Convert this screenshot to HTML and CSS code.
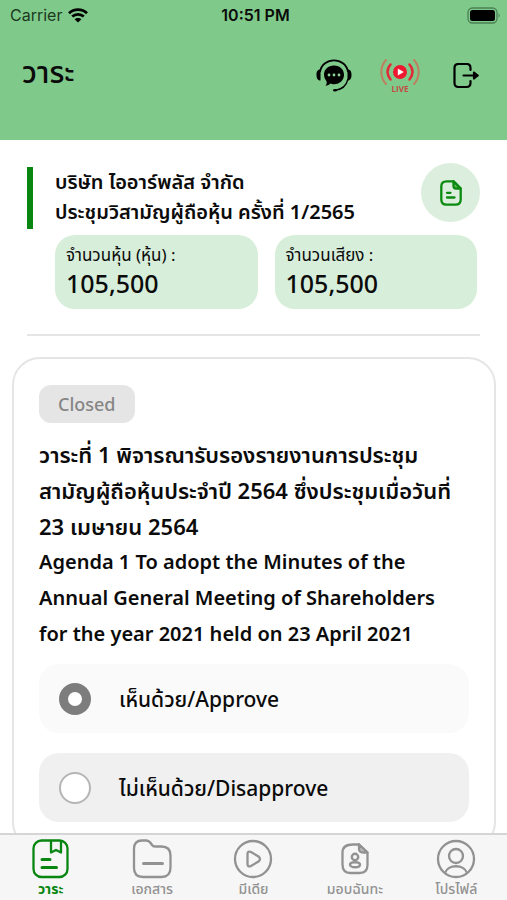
FILE: index.html
```html
<!DOCTYPE html>
<html lang="th">
<head>
<meta charset="utf-8">
<meta name="viewport" content="width=device-width, initial-scale=1">
<title>วาระ</title>
<link rel="stylesheet" href="styles.css">
</head>
<body>
<header class="top">
  <div class="status">
    <div class="carrier"><span>Carrier</span>
      <svg width="20" height="15" viewBox="0 0 20 15" fill="none" stroke="#000" stroke-width="2.7"><path d="M1 5.2C6 .4 14 .4 19 5.2M4.2 8.6c3.300-3.100 8.300-3.100 11.600 0"/><path d="M10 14.600 6.600 11.300c1.900-1.800 4.900-1.800 6.800 0z" fill="#000" stroke="none"/></svg>
    </div>
    <time class="clock">10:51 PM</time>
    <svg class="battery" width="34" height="17" viewBox="0 0 34 17"><rect x="1" y="1" width="29" height="15" rx="4.500" fill="none" stroke="#4c8054" stroke-width="1.300"/><rect x="3" y="3" width="25" height="11" rx="2.500"/><path d="M31.500 6.500c1.600.5 1.600 3.500 0 4z" fill="#4c8054"/></svg>
  </div>
  <div class="titlebar">
    <h1>วาระ</h1>
    <div class="actions">
      <button type="button" aria-label="Support chat">
        <svg width="36" height="34" viewBox="0 0 36 34" fill="none" stroke="#000"><path d="M4 13C6.500-2.500 29.500-2.500 32 13" stroke-width="1.800"/><path d="M4.500 10.500C1 10.500.5 13 .5 16s1 5.500 4 5.500zM31.500 10.500c3.500 0 4 2.500 4 5.500s-1 5.500-4 5.500z" fill="#000" stroke="none"/><path d="M32 20c-1.500 6.500-6.500 10.600-13 11.300" stroke-width="1.300"/><ellipse cx="19" cy="31.300" rx="2" ry="1.300" fill="#000" stroke="none"/><path d="M18 6.500c6 0 10 4 10 9.300s-4 9.400-10 9.400c-1.500 0-2.500-.2-3.700-.7-1.400 1.600-3 2.200-5 2.300 1.200-1.300 1.600-2.600 1.300-4.400A9 9 0 0 1 8 15.800c0-5.300 4-9.300 10-9.300z" fill="#000" stroke="none"/><g fill="#8cd597" stroke="none"><circle cx="13" cy="16" r="1.400"/><circle cx="18" cy="16" r="1.400"/><circle cx="23" cy="16" r="1.400"/></g></svg>
      </button>
      <button type="button" aria-label="Live" class="live">
        <svg width="40" height="26" viewBox="0 0 40 26" fill="none" stroke-linecap="round"><circle cx="20" cy="13" r="7" fill="#ed172f"/><path d="M17.800 9.500v7l6-3.500z" fill="#fff"/><path d="M10.500 5.500c-4 4.500-4 10.500 0 15M29.500 5.500c4 4.500 4 10.500 0 15" stroke="#e22a38" stroke-width="2.500"/><path d="M6 1C-.3 8-.3 18 6 25M34 1c6.300 7 6.300 17 0 24" stroke="#bd8161" stroke-width="2"/></svg>
        <span>LIVE</span>
      </button>
      <button type="button" aria-label="Log out">
        <svg width="26" height="26" viewBox="0 0 26 26" fill="none" stroke="#000" stroke-width="2.200" stroke-linecap="round" stroke-linejoin="round"><path d="M17.500 7V5q0-4-4-4H5.500q-4 0-4 4v15q0 4 4 4h8q4 0 4-4v-2M10.500 12.500h14"/><path d="M21 9.500l3.500 3-3.500 3z" fill="#000"/></svg>
      </button>
    </div>
  </div>
</header>

<main>
  <section class="company">
    <div class="heading">
      <h2>บริษัท ไออาร์พลัส จำกัด<br>ประชุมวิสามัญผู้ถือหุ้น ครั้งที่ 1/2565</h2>
      <button type="button" class="doc" aria-label="Document">
        <svg width="22" height="26" viewBox="0 0 22 26" fill="none" stroke="#0b8a10" stroke-width="2.300" stroke-linecap="round" stroke-linejoin="round"><path d="M13.500 1.300H6.500Q1.300 1.300 1.300 6.500v13q0 5.200 5.200 5.200h9q5.200 0 5.200-5.200V8.500z"/><path d="M13.500 1.300V6q0 2.500 2.500 2.500h4.700z" fill="#0b8a10" fill-opacity=".55"/><path d="M7 12.800h3.500M7 17.500h7.500"/></svg>
      </button>
    </div>
    <dl class="totals">
      <div><dt>จำนวนหุ้น (หุ้น) :</dt><dd>105,500</dd></div>
      <div><dt>จำนวนเสียง :</dt><dd>105,500</dd></div>
    </dl>
  </section>

  <article class="agenda">
    <span class="badge">Closed</span>
    <h3><span class="thai">วาระที่ 1 พิจารณารับรองรายงานการประชุม<br>สามัญผู้ถือหุ้นประจำปี 2564 ซึ่งประชุมเมื่อวันที่<br>23 เมษายน 2564</span><span class="english" lang="en">Agenda 1 To adopt the Minutes of the<br>Annual General Meeting of Shareholders<br>for the year 2021 held on 23 April 2021</span></h3>
    <div class="votes" role="radiogroup" aria-label="Vote">
      <label class="vote chosen"><input type="radio" name="vote" checked><span>เห็นด้วย/Approve</span></label>
      <label class="vote"><input type="radio" name="vote"><span>ไม่เห็นด้วย/Disapprove</span></label>
    </div>
  </article>
</main>

<nav class="tabs">
  <a href="#agenda" class="active" aria-current="page">
    <svg width="40" height="40" viewBox="0 0 40 40"><rect x="2.500" y="1.500" width="34" height="36.500" rx="8"/><path d="M20 2v11.500l5-2.500 5 2.500V2"/><path d="M11 20.500h8M11 28.500h14.500" stroke-width="3"/></svg>
    <span>วาระ</span>
  </a>
  <a href="#documents">
    <svg width="40" height="40" viewBox="0 0 40 40"><path d="M2 10q0-8.500 8-8.500h4q3 0 5 3l1 1.500q1 1.500 3 1.500h6.500q9 0 9 9v12q0 9.500-9 9.500H11q-9 0-9-9z"/><path d="M11.500 24.500h19" stroke-width="3"/></svg>
    <span>เอกสาร</span>
  </a>
  <a href="#media">
    <svg width="40" height="40" viewBox="0 0 40 40"><circle cx="20" cy="20" r="18"/><path d="M14.500 15q0-3.500 3.500-2l7.500 4.500q3 2.500 0 5L18 27q-3.500 1.500-3.500-2z"/></svg>
    <span>มีเดีย</span>
  </a>
  <a href="#proxy">
    <svg width="40" height="40" viewBox="0 0 40 40"><path d="M24 5.500h-6q-10.500 0-10.500 8v12q0 8.500 8 8.500h9q8 0 8-8V13.500z"/><path d="M24 5.500v4q0 4 4 4h4.500L24 5.500" fill="#bbb"/><g stroke-width="2.400"><circle cx="20" cy="18" r="3.200"/><ellipse cx="20" cy="25.700" rx="5" ry="2.500"/></g></svg>
    <span>มอบฉันทะ</span>
  </a>
  <a href="#profile">
    <svg width="40" height="40" viewBox="0 0 40 40"><circle cx="20" cy="20" r="18"/><circle cx="20" cy="17" r="7"/><path d="M9 34c2.500-9 19.500-9 22 0"/></svg>
    <span>โปรไฟล์</span>
  </a>
</nav>
</body>
</html>
```
FILE: styles.css
```css
* { box-sizing: border-box; }
body {
  margin: 0;
  height: 100vh;
  display: flex;
  flex-direction: column;
  background: #fff;
  color: #0b0b0b;
  font-family: "Noto Sans", "Noto Sans Thai", sans-serif;
}
h1, h2, h3, dl, dd { margin: 0; }
button { border: 0; padding: 0; background: none; color: inherit; font: inherit; }
svg { display: block; }

.top { flex: none; height: 140px; background: #7fc98a; }
.status {
  display: grid;
  grid-template-columns: 1fr auto 1fr;
  align-items: center;
  height: 30px;
  padding: 0 6px 0 10px;
  font: 16px/20px Inter, sans-serif;
}
.carrier { display: flex; align-items: center; gap: 6px; color: #1c3a20; }
.clock { font-weight: 600; }
.battery { justify-self: end; }
.titlebar {
  display: flex;
  justify-content: space-between;
  align-items: center;
  height: 92px;
  padding: 0 21px 0 22px;
}
h1 { padding-bottom: 8px; font-size: 30px; line-height: 32px; font-weight: 500; }
.actions { display: flex; align-items: center; gap: 26px; }
.actions button { display: grid; justify-items: center; width: 40px; }
.live { color: #c24b43; font: 700 8px/8px "Open Sans", sans-serif; }

main { flex: 1; min-height: 0; overflow: hidden; }
.company { margin: 0 27px; padding: 23px 0 25px; border-bottom: 2px solid #e5e5e5; }
.heading { display: flex; justify-content: space-between; }
h2 {
  margin-top: 4px;
  padding: 0 0 2px 22px;
  border-left: 6px solid #088611;
  font-size: 20px;
  line-height: 30px;
  font-weight: 600;
  white-space: nowrap;
}
.doc {
  flex: none;
  display: grid;
  place-items: center;
  width: 59px;
  height: 59px;
  border-radius: 50%;
  background: #dceedd;
}
.totals {
  display: grid;
  grid-template-columns: 1fr 1fr;
  gap: 17px;
  margin: 6px 3px 0 28px;
}
.totals div { height: 74px; padding: 8px 11px; border-radius: 20px; background: #d7eeda; }
dt { font-size: 17px; line-height: 24px; }
dd { font-size: 25px; line-height: 32px; font-weight: 500; }

.agenda {
  margin: 21px 11px 0 12px;
  padding: 26px 25px;
  border: 2px solid #e5e5e5;
  border-radius: 28px;
}
.badge {
  display: inline-block;
  padding: 5px 19px;
  border-radius: 12px;
  background: #e5e5e5;
  color: #858585;
  font-size: 18px;
  line-height: 28px;
  font-weight: 500;
}
h3 { margin-top: 13px; line-height: 36px; font-weight: 600; white-space: nowrap; }
h3 span { display: block; }
.thai { font-size: 22px; }
.english { font-size: 20px; }
.votes { display: grid; gap: 20px; margin-top: 12px; }
.vote {
  display: flex;
  align-items: center;
  gap: 28px;
  height: 69px;
  padding: 0 20px;
  border-radius: 20px;
  background: #f0f0f0;
  font-size: 21px;
  line-height: 32px;
  font-weight: 500;
}
.vote.chosen { background: #fafafa; }
.vote input {
  appearance: none;
  flex: none;
  width: 32px;
  height: 32px;
  margin: 0;
  border: 2px solid #b5b5b5;
  border-radius: 50%;
  background: #fff;
}
.vote input:checked { border: 9px solid #7d7d7d; }

.tabs {
  flex: none;
  display: grid;
  grid-template-columns: repeat(5, 1fr);
  height: 67px;
  padding-top: 4px;
  border-top: 2px solid #d5d5d5;
  background: #f6f6f6;
}
.tabs a {
  display: flex;
  flex-direction: column;
  align-items: center;
  color: #929292;
  font-size: 14px;
  line-height: 20px;
  font-weight: 500;
  text-decoration: none;
}
.tabs .active { color: #088611; font-weight: 700; }
.tabs svg {
  fill: none;
  stroke: currentColor;
  stroke-width: 2.3;
  stroke-linecap: round;
  stroke-linejoin: round;
}
```
